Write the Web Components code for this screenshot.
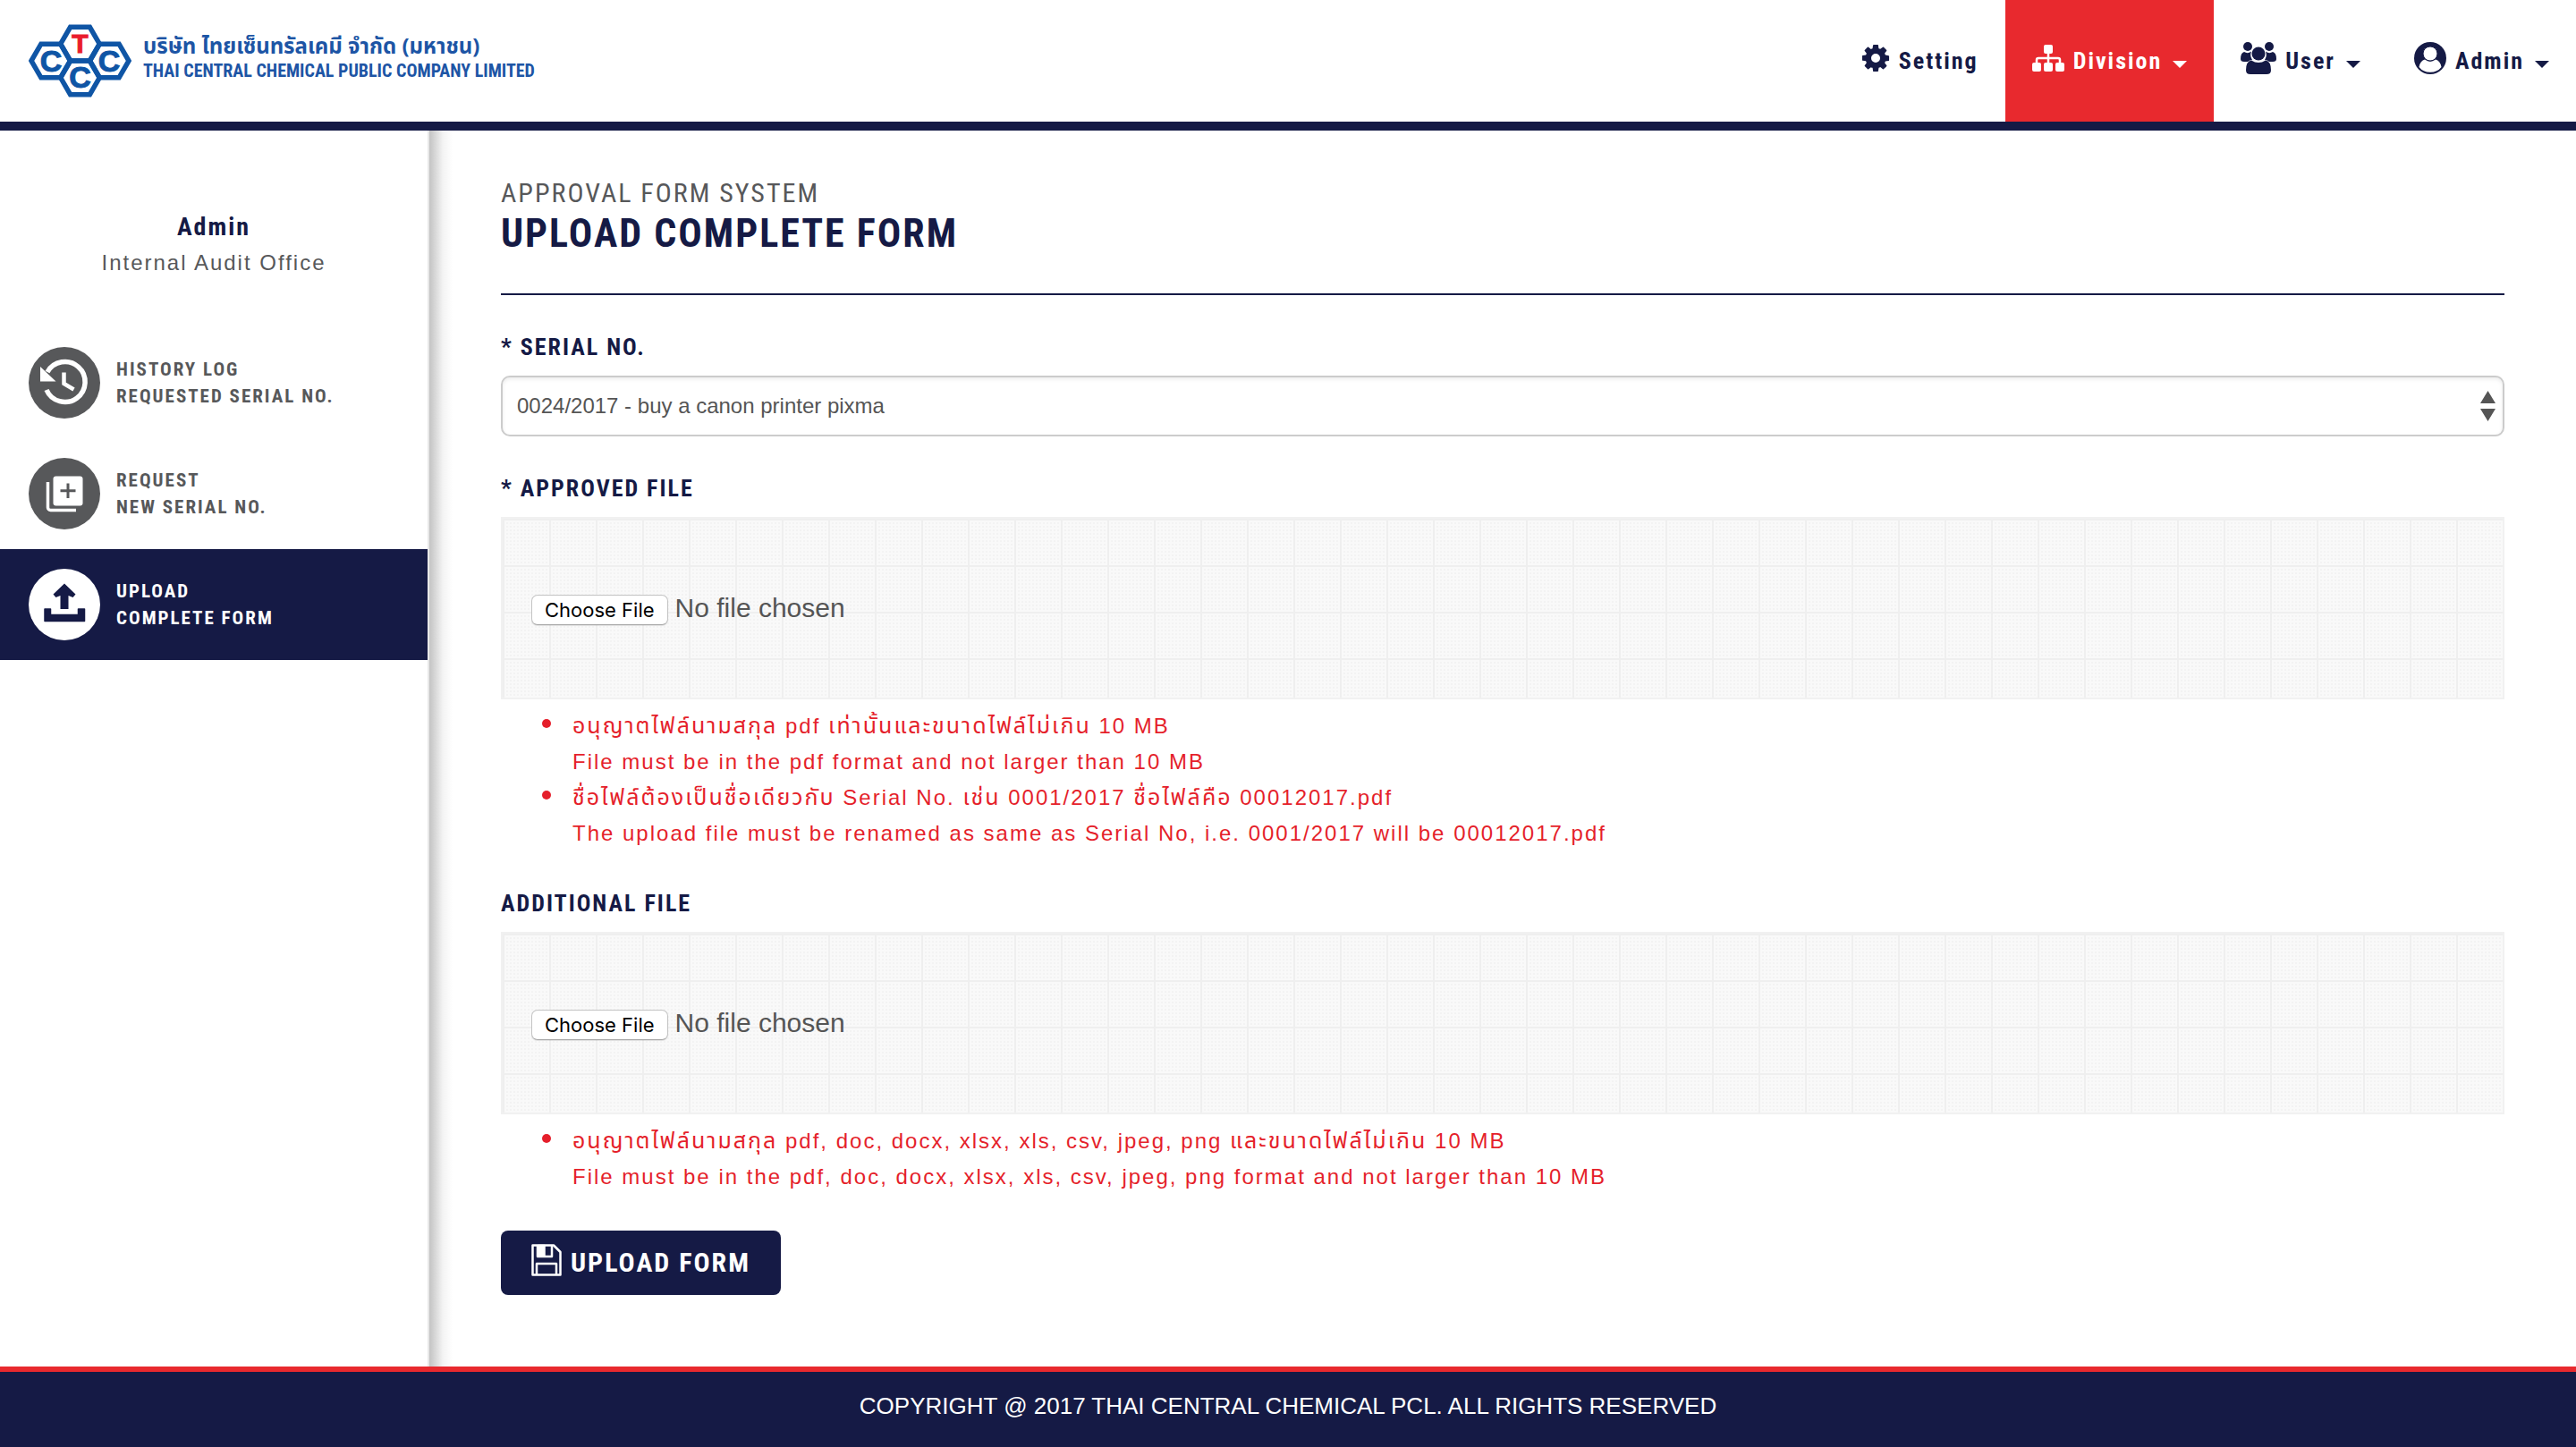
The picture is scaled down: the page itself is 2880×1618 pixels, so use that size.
<!DOCTYPE html>
<html lang="en">
<head>
<meta charset="utf-8">
<title>Upload Complete Form</title>
<style>
  :root {
    --navy: #151a45;
    --red: #e8292e;
    --hint: #e51f2b;
    --grey: #57585a;
    --blue: #1d55a5;
    --narrow: "Roboto Condensed", "Open Sans Condensed", Roboto, sans-serif;
    --sans: "Liberation Sans", Arial, sans-serif;
    --track: 2px;
  }
  body { margin: 0; background: #fff; font-family: var(--sans); color: var(--grey); }
</style>
</head>
<body>
<app-shell>
  <app-header slot="header">
    <nav-item icon="cog">Setting</nav-item>
    <nav-item icon="sitemap" active menu>Division</nav-item>
    <nav-item icon="users" menu>User</nav-item>
    <nav-item icon="account" menu>Admin</nav-item>
  </app-header>
  <side-bar slot="side" name="Admin" office="Internal Audit Office">
    <side-item icon="history">History Log<br>Requested Serial No.</side-item>
    <side-item icon="request">Request<br>New Serial No.</side-item>
    <side-item icon="upload" active>Upload<br>Complete Form</side-item>
  </side-bar>
  <page-title system="Approval Form System">Upload Complete Form</page-title>
  <upload-form>
    <select-field label="* Serial No.">
      <option>0024/2017 - buy a canon printer pixma</option>
    </select-field>
    <file-field label="* Approved File">
      <li><span lang="th">อนุญาตไฟล์นามสกุล</span> pdf <span lang="th">เท่านั้นและขนาดไฟล์ไม่เกิน</span> 10 MB<br>File must be in the pdf format and not larger than 10 MB</li>
      <li><span lang="th">ชื่อไฟล์ต้องเป็นชื่อเดียวกับ</span> Serial No. <span lang="th">เช่น</span> 0001/2017 <span lang="th">ชื่อไฟล์คือ</span> 00012017.pdf<br>The upload file must be renamed as same as Serial No, i.e. 0001/2017 will be 00012017.pdf</li>
    </file-field>
    <file-field label="Additional File">
      <li><span lang="th">อนุญาตไฟล์นามสกุล</span> pdf, doc, docx, xlsx, xls, csv, jpeg, png <span lang="th">และขนาดไฟล์ไม่เกิน</span> 10 MB<br>File must be in the pdf, doc, docx, xlsx, xls, csv, jpeg, png format and not larger than 10 MB</li>
    </file-field>
  </upload-form>
  <app-footer slot="footer">COPYRIGHT @ 2017 THAI CENTRAL CHEMICAL PCL. ALL RIGHTS RESERVED</app-footer>
</app-shell>

<script>
const ICONS = {
  cog: `<svg width="32" height="32" viewBox="80 80 1632 1632" fill="currentColor"><path d="M1152 896q0-106-75-181t-181-75-181 75-75 181 75 181 181 75 181-75 75-181zm512-109v222q0 12-8 23t-20 13l-185 28q-19 54-39 91 35 50 107 138 10 12 10 25t-9 23q-27 37-99 108t-94 71q-12 0-26-9l-138-108q-44 23-91 38-16 136-29 186-7 28-36 28h-222q-14 0-24.5-8.500t-11.5-21.500l-28-184q-49-16-90-37l-141 107q-10 9-25 9-14 0-25-11-126-114-165-168-7-10-7-23 0-12 8-23 15-21 51-66.500t54-70.500q-27-50-41-99l-183-27q-13-2-21-12.500t-8-23.500v-222q0-12 8-23t19-13l186-28q14-46 39-92-40-57-107-138-10-12-10-24 0-10 9-23 26-36 98.500-107.500t94.500-71.500q13 0 26 10l138 107q44-23 91-38 16-136 29-186 7-28 36-28h222q14 0 24.500 8.500t11.500 21.500l28 184q49 16 90 37l142-107q9-9 24-9 13 0 25 10 129 119 165 170 7 8 7 22 0 12-8 23-15 21-51 66.500t-54 70.500q26 50 41 98l183 28q13 2 21 12.500t8 23.500z"/></svg>`,
  sitemap: `<svg width="36" height="32" viewBox="0 0 36 32" fill="currentColor"><rect x="13" y="1" width="10" height="10" rx="2"/><rect x="0" y="21" width="10" height="10" rx="2"/><rect x="13" y="21" width="10" height="10" rx="2"/><rect x="26" y="21" width="10" height="10" rx="2"/><path d="M18 10V22M5 22V18a2 2 0 0 1 2-2H29a2 2 0 0 1 2 2V22" fill="none" stroke="currentColor" stroke-width="2.500"/></svg>`,
  users: `<svg width="40" height="36" viewBox="0 0 40 36" fill="currentColor"><circle cx="8" cy="5" r="5"/><circle cx="32" cy="5" r="5"/><path d="M4 11q4 2.500 8-.5-2 5 1 9.500-3 0-5 2H4q-4 0-4-3 0-7 4-8zM36 11q-4 2.500-8-.5 2 5-1 9.500 3 0 5 2h4q4 0 4-3 0-7-4-8z"/><circle cx="20" cy="13" r="7.500"/><path d="M12 20.500q8 5 16 0 6 1 6 11 0 4.500-5 4.500H11q-5 0-5-4.500 0-10 6-11z"/></svg>`,
  account: `<svg width="36" height="36" viewBox="0 0 36 36"><circle cx="18" cy="18" r="18" fill="currentColor"/><path fill="#fff" d="M12 19.500q6 4.500 12 0 5 1 6.500 8.500Q26 33.800 18 33.800T5.500 28Q7 20.500 12 19.500z"/><circle cx="18" cy="13" r="8" fill="#fff" stroke="currentColor" stroke-width="1"/></svg>`,
  history: `<svg width="80" height="80" viewBox="0 0 80 80"><circle cx="40" cy="40" r="40" fill="#57585a"/><path d="M20 48A22.500 22.500 0 1 0 21 28" fill="none" stroke="#fff" stroke-width="5.500"/><path d="M13 22V38.500H30.500z" fill="#fff"/><path d="M39.500 28.500V41L50.500 47.500" fill="none" stroke="#fff" stroke-width="4.500"/></svg>`,
  request: `<svg width="80" height="80" viewBox="0 0 80 80"><circle cx="40" cy="40" r="40" fill="#57585a"/><rect x="27.500" y="20.500" width="33" height="33" rx="3" fill="#fff"/><path d="M44 28.500V45M35.500 36.700H52.500" stroke="#57585a" stroke-width="3"/><path d="M21.500 27V55.500a3 3 0 0 0 3 3H53" fill="none" stroke="#fff" stroke-width="3.500"/></svg>`,
  upload: `<svg width="80" height="80" viewBox="0 0 80 80"><circle cx="40" cy="40" r="40" fill="#fff"/><path fill="#151a45" d="M40 16.500L52.500 28.500 49.500 32 44.500 30V45H35.500V30L30.500 32 27.500 28.500z"/><path fill="#151a45" stroke="#151a45" stroke-width="1.500" stroke-linejoin="round" d="M18 45H24.500V51.500H55.500V45H62.500V58.500H18z"/></svg>`,
  save: `<svg width="34" height="36" viewBox="0 0 34 36" fill="none" stroke="#fff" stroke-width="2.500" stroke-linejoin="round"><path d="M1.500 1.500H25L32.500 9V34.500H1.500z"/><path d="M7 2V14H23V2M6 34V22H28V34"/><path d="M8 2H14.500V13H8z" fill="#fff"/></svg>`
};

function define(name, html, setup) {
  const template = document.createElement("template");
  template.innerHTML = html;
  customElements.define(name, class extends HTMLElement {
    constructor() {
      super();
      this.attachShadow({ mode: "open" }).append(template.content.cloneNode(true));
    }
    connectedCallback() {
      if (setup && !this.ready) { this.ready = true; setup(this, s => this.shadowRoot.querySelector(s)); }
    }
  });
}

define("app-shell", `
  <style>
    :host { display: flex; flex-direction: column; min-height: 100vh; }
    .row { display: flex; flex: 1; }
    aside { flex: 0 0 calc(100% / 6); box-sizing: border-box; border-right: 2px solid #e8e8e8; }
    main { flex: 1; min-width: 0; padding: 50px 80px 80px;
      background: linear-gradient(to right, #c3c3c3, #d9d9d9 7px, #f3f3f3 15px, #fff 26px) no-repeat 0 0 / 26px 100%; }
  </style>
  <slot name="header"></slot>
  <div class="row"><aside><slot name="side"></slot></aside><main><slot></slot></main></div>
  <slot name="footer"></slot>`);

define("app-header", `
  <style>
    :host { display: block; border-bottom: 10px solid var(--navy); }
    header { display: flex; justify-content: space-between; height: 136px; }
    nav { display: flex; }
    .brand { display: flex; align-items: center; gap: 12px; padding-left: 30px; text-decoration: none; color: var(--blue); }
    .brand svg { display: block; font: bold 34px "Liberation Sans", Arial, sans-serif; }
    .names { display: flex; flex-direction: column; margin-bottom: 4px; white-space: nowrap; }
    .th { font: bold 24px/26px "Noto Sans Thai", "Noto Sans", sans-serif; }
    .en { font: bold 20px/26px var(--narrow); }
  </style>
  <header>
    <a class="brand" href="#">
      <svg width="118" height="84" viewBox="30 26 118 84" role="img" aria-label="TCCC">
        <g fill="none" stroke="#0f55a5" stroke-width="5.500">
          <path d="M67.700 49.200L78.600 30.300H100.400L111.300 49.200L100.400 68H78.600z"/>
          <path d="M67.700 86.800L78.600 68H100.400L111.300 86.800L100.400 105.700H78.600z"/>
          <path d="M35 68L45.900 49.200H67.700L78.600 68L67.700 86.800H45.900z"/>
          <path d="M100.400 68L111.300 49.200H133.100L144 68L133.100 86.800H111.300z"/>
        </g>
        <g text-anchor="middle" fill="#0f55a5" stroke="#0f55a5">
          <text x="89.500" y="59" font-size="30" fill="#ea1c2d" stroke="#ea1c2d">T</text>
          <text x="57" y="80">C</text><text x="122" y="80">C</text><text x="89.500" y="98">C</text>
        </g>
      </svg>
      <span class="names">
        <span class="th">บริษัท ไทยเซ็นทรัลเคมี จำกัด (มหาชน)</span>
        <span class="en">THAI CENTRAL CHEMICAL PUBLIC COMPANY LIMITED</span>
      </span>
    </a>
    <nav><slot></slot></nav>
  </header>`);

define("nav-item", `
  <style>
    :host { display: flex; color: var(--navy); }
    :host([active]) { background: var(--red); color: #fff; }
    a { display: flex; align-items: center; padding: 0 30px; color: inherit; text-decoration: none;
      font: bold 26px/40px var(--narrow); letter-spacing: var(--track); }
    .icon { display: flex; margin: 0 10px 6px 0; }
    .caret { display: none; margin: 8px 0 0 12px; border: 8px solid transparent; border-top-color: currentColor; border-bottom: 0; }
    :host([menu]) .caret { display: block; }
  </style>
  <a href="#"><span class="icon"></span><slot></slot><span class="caret"></span></a>`,
  (el, $) => { $(".icon").innerHTML = ICONS[el.getAttribute("icon")]; });

define("side-bar", `
  <style>
    :host { display: block; padding-top: 88px; }
    .who { margin-bottom: 52px; text-align: center; line-height: 40px; letter-spacing: var(--track); }
    b { display: block; font-family: var(--narrow); font-size: 28px; color: var(--navy); }
    span { display: block; font-size: 24px; }
  </style>
  <div class="who"><b></b><span></span></div>
  <nav><slot></slot></nav>`,
  (el, $) => { $("b").textContent = el.getAttribute("name"); $("span").textContent = el.getAttribute("office"); });

define("side-item", `
  <style>
    :host { display: block; color: var(--grey); }
    :host([active]) { background: var(--navy); color: #fff; }
    a { display: flex; align-items: center; gap: 18px; padding: 22px 32px; color: inherit; text-decoration: none;
      text-transform: uppercase; font: bold 21px/30px var(--narrow); letter-spacing: var(--track); }
    .icon { display: flex; }
  </style>
  <a href="#"><span class="icon"></span><span><slot></slot></span></a>`,
  (el, $) => { $(".icon").innerHTML = ICONS[el.getAttribute("icon")]; });

define("page-title", `
  <style>
    :host { display: block; padding-bottom: 42px; border-bottom: 2px solid var(--navy);
      font-family: var(--narrow); letter-spacing: var(--track); text-transform: uppercase; }
    p, h1 { margin: 0; }
    p { font-size: 30px; line-height: 40px; }
    h1 { font-size: 44px; line-height: 50px; color: var(--navy); }
  </style>
  <p></p><h1><slot></slot></h1>`,
  (el, $) => { $("p").textContent = el.getAttribute("system"); });

const LABEL = `label { display: block; margin-bottom: 14px; color: var(--navy); text-transform: uppercase;
  font: bold 26px/36px var(--narrow); letter-spacing: var(--track); }`;

define("upload-form", `
  <style>
    form { display: flex; flex-direction: column; align-items: stretch; gap: 40px; padding-top: 40px; }
    button { display: flex; align-items: center; align-self: flex-start; gap: 10px; height: 72px; padding: 0 34px;
      border: 0; border-radius: 8px; background: var(--navy); color: #fff;
      font: bold 30px/40px var(--narrow); letter-spacing: var(--track); }
    svg { display: block; margin-bottom: 6px; }
  </style>
  <form><slot></slot><button type="button">${ICONS.save}UPLOAD FORM</button></form>`);

define("select-field", `
  <style>
    :host { display: block; }
    ${LABEL}
    .box { display: grid; }
    .box > * { grid-area: 1 / 1; }
    select { appearance: none; width: 100%; height: 68px; padding: 0 16px; border: 2px solid #ccc; border-radius: 10px;
      background: #fff; box-shadow: inset 0 2px 4px #00000014; color: #555; font: 24px/40px var(--sans); }
    svg { justify-self: end; align-self: center; margin-right: 10px; pointer-events: none; }
  </style>
  <label for="control"></label>
  <div class="box"><select id="control"></select>
    <svg width="17" height="34" viewBox="0 0 17 34" fill="#555"><path d="M8.500 0L17 14H0zM0 20H17L8.500 34z"/></svg></div>`,
  (el, $) => { $("label").textContent = el.getAttribute("label"); $("select").append(...el.querySelectorAll("option")); });

define("file-field", `
  <style>
    :host { display: block; }
    ${LABEL}
    .drop { display: flex; align-items: center; box-sizing: border-box; height: 204px; padding: 0 32px; border: 2px solid #f1f1f1;
      background-color: #f9f9f9;
      background-image:
        linear-gradient(#efefef 2px, transparent 2px), linear-gradient(90deg, #efefef 2px, transparent 2px),
        conic-gradient(at 2px 2px, transparent 75%, #f3f3f3 0);
      background-size: 52px 52px, 52px 52px, 4px 4px; }
    input { flex: 1; font: 30px/40px var(--sans); color: #555; }
    input::file-selector-button { height: 34px; margin: 0 8px 0 0; padding: 0 14px; border: 1px solid #c4c4c4; border-bottom-color: #a8a8a8;
      border-radius: 7px; background: #fff; box-shadow: 0 1px 1px #0000001a; color: #000; font: 22px/32px Inter, Roboto, sans-serif; }
    ul { margin: 10px 0 0; padding: 0 0 0 80px; list-style: none; color: var(--hint); font-size: 24px; line-height: 40px; letter-spacing: var(--track); }
    li::before { content: ""; display: inline-block; width: 10px; height: 10px; margin: 0 24px 0 -34px; border-radius: 50%;
      background: currentColor; vertical-align: 6px; }
    [lang="th"] { font: 25px/25px "Noto Sans Thai", "Noto Sans", sans-serif; }
  </style>
  <label for="control"></label>
  <div class="drop"><input id="control" type="file"></div>
  <ul></ul>`,
  (el, $) => { $("label").textContent = el.getAttribute("label"); $("ul").append(...el.querySelectorAll("li")); });

define("app-footer", `
  <style>
    :host { display: block; border-top: 6px solid var(--red); background: var(--navy); color: #fff; }
    footer { padding: 18px 0 26px; text-align: center; font-size: 26px; line-height: 40px; }
  </style>
  <footer><slot></slot></footer>`);
</script>
</body>
</html>
